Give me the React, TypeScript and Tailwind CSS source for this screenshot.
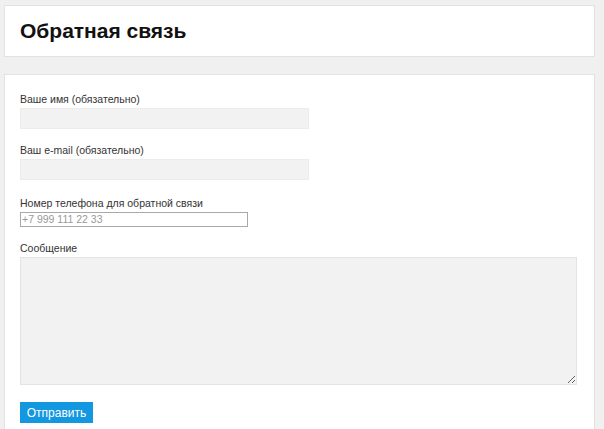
export default function App() {
  const label = "block text-[10.5px] leading-[13px] text-[#333] mb-[2px]"
  return (
    <div className="min-h-screen w-[604px] h-[429px] overflow-hidden bg-[#f0f0f0] pt-[5px] pl-[4px] font-['Liberation_Sans',Arial,sans-serif]">
      <div className="w-[591px] h-[52px] bg-white border border-[#e2e2e2] flex items-center pl-[15px]">
        <h1 className="text-[21px] font-bold text-[#111] leading-none -mt-[1px]">Обратная связь</h1>
      </div>
      <div className="w-[591px] h-[400px] mt-[17px] bg-white border border-[#e2e2e2] pl-[15px] pt-[18px]">
        <label className={label}>Ваше имя (обязательно)</label>
        <input className="block w-[289px] h-[21px] bg-[#f2f2f2] border border-[#ececec] outline-none" />
        <label className={`${label} mt-[15px]`}>Ваш e-mail (обязательно)</label>
        <input className="block w-[289px] h-[21px] bg-[#f2f2f2] border border-[#ececec] outline-none" />
        <label className={`${label} mt-[17px]`}>Номер телефона для обратной связи</label>
        <input
          placeholder="+7 999 111 22 33"
          className="block w-[228px] h-[15px] bg-white border border-[#a9a9a9] text-[10.5px] px-[1px] placeholder:text-[#999] outline-none"
        />
        <label className={`${label} mt-[15px]`}>Сообщение</label>
        <textarea className="block w-[557px] h-[128px] bg-[#f2f2f2] border border-[#e4e4e4] outline-none" />
        <button className="mt-[17px] w-[73px] h-[21px] bg-[#1297e0] text-white text-[12px] leading-none">Отправить</button>
      </div>
    </div>
  )
}
